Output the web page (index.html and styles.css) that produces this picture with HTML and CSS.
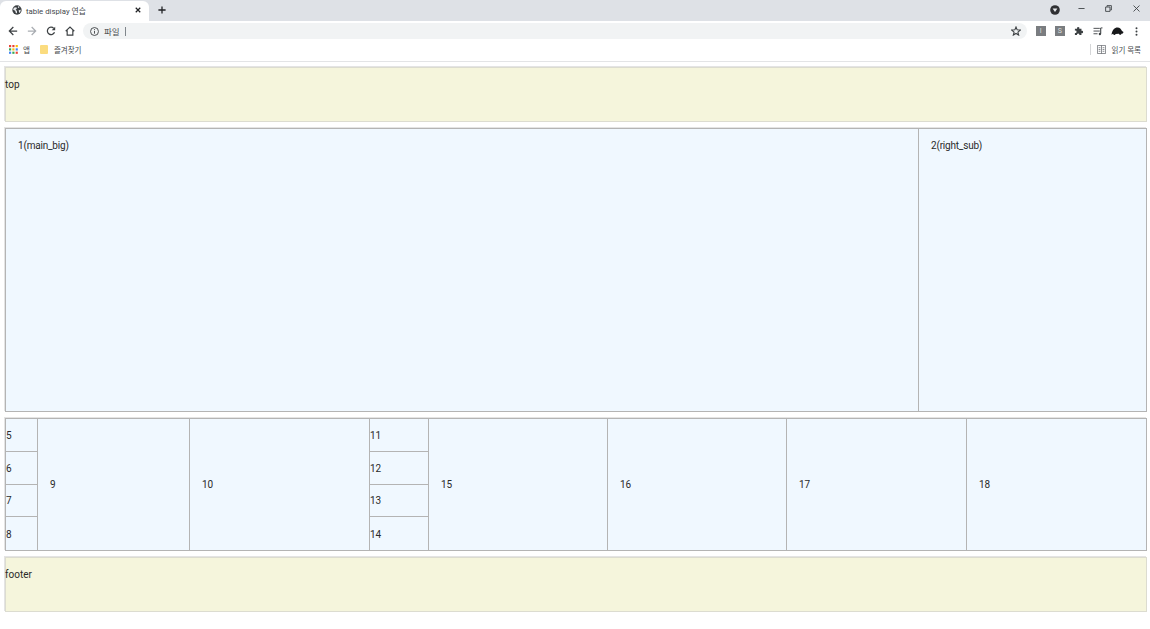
FILE: index.html
```html
<!DOCTYPE html>
<html lang="ko">
<head>
<meta charset="utf-8">
<title>table display 연습</title>
<link rel="stylesheet" href="styles.css">
</head>
<body>
<header class="browser">
  <div class="tabstrip">
    <div class="tab">
      <svg class="globe" width="10" height="10" viewBox="0 0 12 12"><circle cx="6" cy="6" r="5.600" fill="#3c4043"/><path d="M2.200 3.200 5 2.600l1 1.400-1.600 1.600L6 7.200V10L4.600 9.600 3.800 7 1.400 5.600zM7.400 1.400 9 2.200 8.200 3.600 7 3zM8 6.400l2.600-.6-.6 2.400L8.600 9.600z" fill="#e8eaed"/></svg>
      <span class="tab-title">table display 연습</span>
      <svg class="tab-x" width="6" height="6" viewBox="0 0 8 8"><path d="M1 1l6 6M7 1 1 7" stroke="#202124" stroke-width="1.600"/></svg>
    </div>
    <svg class="plus" width="8" height="8" viewBox="0 0 10 10"><path d="M5 .5v9M.5 5h9" stroke="#202124" stroke-width="1.600"/></svg>
    <div class="win">
      <svg class="wprofile" width="10" height="10" viewBox="0 0 10 10"><circle cx="5" cy="5" r="4.800" fill="#2f3033"/><path d="M2.600 3.600h4.800L5 7z" fill="#e8eaed"/></svg>
      <svg class="wmin" width="7" height="7" viewBox="0 0 8 8"><path d="M.5 4h7" stroke="#3c4043"/></svg>
      <svg class="wmax" width="7" height="7" viewBox="0 0 8 8"><path d="M.7 2.300h5v5h-5zM2.300 2V.7h5v5H6" fill="none" stroke="#3c4043"/></svg>
      <svg class="wclose" width="7" height="7" viewBox="0 0 8 8"><path d="M.6.600l6.800 6.800M7.400.6.600 7.400" stroke="#3c4043"/></svg>
    </div>
  </div>
  <div class="toolbar">
    <svg class="nav" width="10" height="10" viewBox="0 0 12 12"><path d="M11 6H2M6.400 1.200 1.600 6l4.800 4.800" fill="none" stroke="#3c4043" stroke-width="1.500"/></svg>
    <svg class="nav" width="10" height="10" viewBox="0 0 12 12"><path d="M1 6h9M5.600 1.200 10.400 6l-4.800 4.800" fill="none" stroke="#a9adb2" stroke-width="1.500"/></svg>
    <svg class="nav" width="10" height="10" viewBox="0 0 12 12"><path d="M10.200 7.400A4.400 4.400 0 1 1 9.300 2.900" fill="none" stroke="#3c4043" stroke-width="1.500"/><path d="M11 .8v4.200H6.800z" fill="#3c4043"/></svg>
    <svg class="nav" width="10" height="10" viewBox="0 0 12 12"><path d="M.8 6.200 6 1.200l5.200 5M2.600 5v6h6.800V5" fill="none" stroke="#3c4043" stroke-width="1.400"/></svg>
    <div class="omnibox">
      <svg width="9" height="9" viewBox="0 0 10 10"><circle cx="5" cy="5" r="4.400" fill="none" stroke="#3c4043"/><path d="M5 4.400v3M5 2.400v1.100" stroke="#3c4043"/></svg>
      <span class="scheme">파일</span>
      <span class="sep"></span>
      <svg class="star" width="10" height="10" viewBox="0 0 12 12"><path d="M6 1.200 7.400 4.600l3.700.3-2.800 2.400.9 3.600L6 9 2.800 10.900l.9-3.600L.9 4.900l3.700-.3z" fill="none" stroke="#3c4043" stroke-width="1.300"/></svg>
    </div>
    <div class="ext">
      <span class="ext-slot"><span class="ext-box">I</span></span>
      <span class="ext-slot"><span class="ext-box">S</span></span>
      <span class="ext-slot"><svg width="10" height="10" viewBox="0 0 11 11"><path d="M1 3h2.400a1.300 1.300 0 1 1 2.400 0H8.200v2.300a1.300 1.300 0 1 1 0 2.400V10H5.800a1.300 1.300 0 1 0-2.400 0H1V7.600a1.300 1.300 0 1 0 0-2.400z" fill="#3c4043"/></svg></span>
      <span class="ext-slot"><svg width="10" height="9" viewBox="0 0 11 10"><path d="M.5 1.500h7M.5 4.500h7M.5 7.500h4.500" stroke="#3c4043"/><path d="M8.500 1v6.400" stroke="#3c4043" stroke-width="1.200"/><circle cx="7.600" cy="7.800" r="1.300" fill="#3c4043"/><path d="M8.500 1h2" stroke="#3c4043"/></svg></span>
      <span class="ext-slot"><svg width="13" height="9" viewBox="0 0 14 10"><path d="M.3 8.600C1.200 3.200 3.800.6 7 .6c2.600 0 4 1.900 5 3.800l1.700 1.100-.8 1.600-1.500.3-.6 1.300-1.500-.2-.8-1.100-3.600.3-.7 1.100-1.600-.3-.5-.9z" fill="#17181a"/></svg></span>
      <span class="ext-slot"><svg width="3" height="9" viewBox="0 0 3 11"><circle cx="1.500" cy="1.500" r="1.200" fill="#3c4043"/><circle cx="1.500" cy="5.500" r="1.200" fill="#3c4043"/><circle cx="1.500" cy="9.500" r="1.200" fill="#3c4043"/></svg></span>
    </div>
  </div>
  <div class="bookmarks">
    <svg width="9" height="9" viewBox="0 0 10 10"><rect width="2.400" height="2.400" fill="#ea4335"/><rect x="3.700" width="2.400" height="2.400" fill="#ea4335"/><rect x="7.400" width="2.400" height="2.400" fill="#fbbc04"/><rect y="3.700" width="2.400" height="2.400" fill="#34a853"/><rect x="3.700" y="3.700" width="2.400" height="2.400" fill="#fbbc04"/><rect x="7.400" y="3.700" width="2.400" height="2.400" fill="#4285f4"/><rect y="7.400" width="2.400" height="2.400" fill="#4285f4"/><rect x="3.700" y="7.400" width="2.400" height="2.400" fill="#34a853"/><rect x="7.400" y="7.400" width="2.400" height="2.400" fill="#ea4335"/></svg>
    <span class="bm-text app">앱</span>
    <svg class="folder" width="8" height="9" viewBox="0 0 8 9"><rect width="8" height="9" rx="1" fill="#fbdc7f"/></svg>
    <span class="bm-text">즐겨찾기</span>
    <div class="reading">
      <span class="rsep"></span>
      <svg width="9" height="9" viewBox="0 0 10 10"><path d="M.5.500h9v9h-9zM5 .5v9M1.800 3h2M1.800 5h2M1.800 7h2M6.200 3h2M6.200 5h2M6.200 7h2" fill="none" stroke="#5f6368" stroke-width=".8"/></svg>
      <span class="bm-text">읽기 목록</span>
    </div>
  </div>
</header>
<main class="page">
  <div class="box band">top</div>
  <section class="box row-main">
    <div class="cell pad top-text">1(main_big)</div>
    <div class="cell pad top-text">2(right_sub)</div>
  </section>
  <section class="box row-grid">
    <div class="cell stack">
      <div class="mini">5</div><div class="mini">6</div><div class="mini">7</div><div class="mini">8</div>
    </div>
    <div class="cell pad mid">9</div>
    <div class="cell pad mid">10</div>
    <div class="cell stack">
      <div class="mini">11</div><div class="mini">12</div><div class="mini">13</div><div class="mini">14</div>
    </div>
    <div class="cell pad mid">15</div>
    <div class="cell pad mid">16</div>
    <div class="cell pad mid">17</div>
    <div class="cell pad mid">18</div>
  </section>
  <div class="box band">footer</div>
</main>
</body>
</html>
```
FILE: styles.css
```css
* { box-sizing: border-box; }
html, body { margin: 0; padding: 0; height: 100%; overflow: hidden; background: #fff; }
body { font-family: Roboto, "Noto Sans CJK KR", sans-serif; font-size: 10px; color: #2a2a2a; }

.browser { height: 62px; border-bottom: 1px solid #e3e4e6; display: flex; flex-direction: column; }
.tabstrip { height: 21px; background: #dee1e6; display: flex; align-items: flex-start; }
.tab { width: 149px; height: 20px; margin-top: 1px; padding: 0 8px 2px 12px; background: #fff; border-radius: 6px 6px 0 0; display: flex; align-items: center; gap: 4px; }
.tab-title { flex: 1; font-size: 7.800px; color: #45494d; }
.plus { margin: 6px 0 0 9px; }
.win { margin-left: auto; display: flex; align-items: flex-start; padding: 5px 10px 0 0; }
.wmin { margin-left: 18px; }
.wmax { margin-left: 20px; }
.wclose { margin-left: 21px; }

.toolbar { height: 20px; display: flex; align-items: center; padding-left: 8px; background: #fff; }
.nav { margin-right: 9px; }
.omnibox { margin-left: -1px; width: 944px; height: 16px; background: #f1f3f4; border-radius: 8px; display: flex; align-items: center; padding: 0 6px 0 7px; }
.scheme { margin-left: 5px; font-size: 8.500px; color: #45494d; }
.sep { width: 1px; height: 9px; background: #80868b; margin-left: 5px; }
.star { margin-left: auto; }
.ext { margin-left: 4px; display: flex; align-items: center; }
.ext-slot { width: 19.200px; display: flex; justify-content: center; align-items: center; }
.ext-box { width: 10px; height: 10px; background: #7a7d80; color: #ddd; font-size: 7px; line-height: 10px; text-align: center; }

.bookmarks { height: 20px; padding: 0 9px 4px 9px; display: flex; align-items: center; }
.bm-text { font-size: 7.500px; color: #45494d; }
.app { margin-left: 5px; }
.folder { margin-left: 10px; margin-right: 6px; }
.reading { margin-left: auto; display: flex; align-items: center; gap: 6px; }
.rsep { width: 1px; height: 11px; background: #d5d6d8; }

.page { padding: 5px 3px 0 5px; display: flex; flex-direction: column; gap: 6px; }
.box { border: 1px solid #b4b4b4; box-shadow: -1px -1px 0 #e4e4e4; }
.band { height: 55px; background: #f5f5dc; border-color: #dcdcd0; padding-top: 11px; line-height: 11px; text-indent: -1px; }
.row-main { height: 284px; display: grid; grid-template-columns: 913px 1fr; background: #f0f8ff; }
.row-grid { height: 133px; display: grid; grid-template-columns: 32px 152px 180px 59px 179px 179px 180px 1fr; background: #f0f8ff; }
.cell { border-right: 1px solid #b4b4b4; }
.cell:last-child { border-right: 0; }
.pad { padding-left: 12px; }
.top-text { padding-top: 11px; line-height: 11px; letter-spacing: -.2px; }
.mid { display: flex; align-items: center; }
.stack { display: grid; grid-template-rows: repeat(4, 1fr); }
.mini { display: flex; align-items: center; padding-top: 1px; border-bottom: 1px solid #b4b4b4; }
.mini:last-child { border-bottom: 0; }
```
